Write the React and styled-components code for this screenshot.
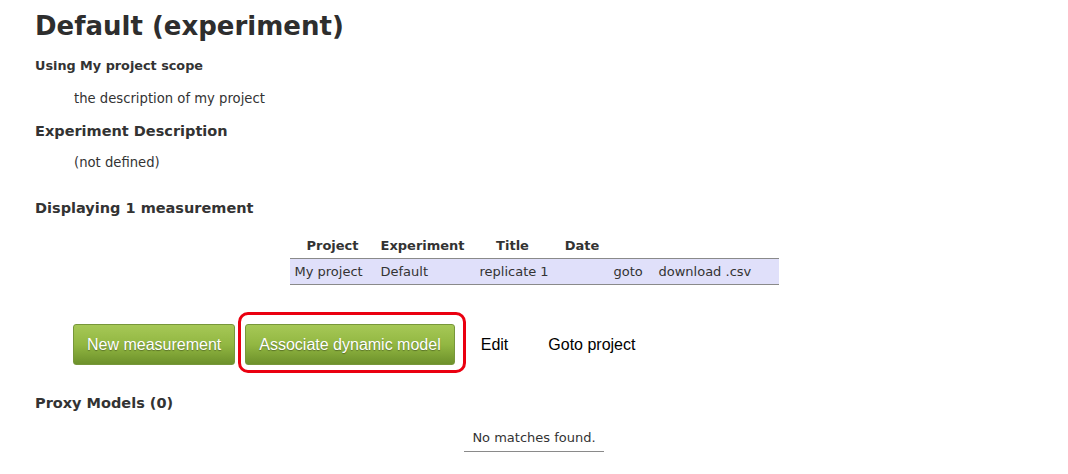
import React from "react";
import styled, { createGlobalStyle } from "styled-components";

const GlobalStyle = createGlobalStyle`
  body {
    margin: 0;
    background: #fff;
    color: #333;
    font-family: "DejaVu Sans", Verdana, sans-serif;
  }
`;

const Page = styled.div`
  padding: 0 35px;
  width: 998px;
`;

const Title = styled.h1`
  margin: 11px 0 0;
  font-size: 26px;
  line-height: 30px;
  font-weight: bold;
  color: #2e2e2e;
`;

const Heading = styled.h3`
  margin: ${(p) => p.$gap}px 0 0;
  font-size: ${(p) => p.$size || 14.5}px;
  line-height: 20px;
  font-weight: bold;
  color: #333;
`;

const Indented = styled.p`
  margin: ${(p) => p.$gap}px 0 0;
  padding-left: 39px;
  font-size: 13.2px;
  line-height: 20px;
  color: #333;
`;

const Table = styled.table`
  margin: 14px auto 0;
  border-collapse: collapse;
  table-layout: fixed;
  width: 489px;
  font-size: 13px;
  color: #333;

  & th {
    height: 26px;
    padding: 0 5px;
    font-weight: bold;
    text-align: center;
  }

  & td {
    height: 25px;
    padding: 0 5px;
    text-align: left;
    white-space: nowrap;
    background: #e0e0fa;
    border-top: 1px solid #8a8a8a;
    border-bottom: 1px solid #8a8a8a;
  }

  & td.title {
    padding-left: 10px;
  }
`;

const Actions = styled.div`
  display: flex;
  align-items: flex-start;
  margin: 27px 0 0 38px;
`;

const GreenButton = styled.button`
  margin-top: ${(p) => (p.$plain ? 12 : 0)}px;
  height: 41px;
  padding: 0 13px;
  border: 1px solid #77973a;
  border-radius: 3px;
  background: linear-gradient(to bottom, #a6c856 0%, #92b742 50%, #6d912b 100%);
  color: #fff;
  font-family: "Liberation Sans", Arial, sans-serif;
  font-size: 16px;
  text-shadow: 0 1px 1px rgba(0, 0, 0, 0.35);
  cursor: pointer;
`;

const Highlight = styled.div`
  margin-left: 3px;
  padding: 9px 8px 5px 4px;
  border: 3px solid #ea0010;
  border-radius: 10px;
  display: flex;
`;

const TextLink = styled.a`
  margin: 12px 0 0 ${(p) => p.$gap}px;
  line-height: 41px;
  font-family: "Liberation Sans", Arial, sans-serif;
  font-size: 16px;
  color: #000;
  text-decoration: none;
`;

const Empty = styled.div`
  margin: 15px auto 0;
  width: max-content;
  padding: 0 8px 3px;
  border-bottom: 1px solid #8a8a8a;
  font-size: 13px;
  line-height: 20px;
  color: #333;
`;

const App = () => {
  return (
    <Page>
      <GlobalStyle />
      <Title>Default (experiment)</Title>
      <Heading $size={12.8} $gap={15}>Using My project scope</Heading>
      <Indented $gap={13}>the description of my project</Indented>
      <Heading $gap={12}>Experiment Description</Heading>
      <Indented $gap={12}>(not defined)</Indented>
      <Heading $gap={25}>Displaying 1 measurement</Heading>

      <Table>
        <colgroup>
          <col style={{ width: 86 }} />
          <col style={{ width: 94 }} />
          <col style={{ width: 86 }} />
          <col style={{ width: 53 }} />
          <col style={{ width: 45 }} />
          <col style={{ width: 125 }} />
        </colgroup>
        <thead>
          <tr>
            <th>Project</th>
            <th>Experiment</th>
            <th>Title</th>
            <th>Date</th>
            <th></th>
            <th></th>
          </tr>
        </thead>
        <tbody>
          <tr>
            <td>My project</td>
            <td>Default</td>
            <td className="title">replicate 1</td>
            <td></td>
            <td>goto</td>
            <td>download .csv</td>
          </tr>
        </tbody>
      </Table>

      <Actions>
        <GreenButton $plain>New measurement</GreenButton>
        <Highlight>
          <GreenButton>Associate dynamic model</GreenButton>
        </Highlight>
        <TextLink $gap={15}>Edit</TextLink>
        <TextLink $gap={40}>Goto project</TextLink>
      </Actions>

      <Heading $gap={20}>Proxy Models (0)</Heading>
      <Empty>No matches found.</Empty>
    </Page>
  );
};

export default App;
